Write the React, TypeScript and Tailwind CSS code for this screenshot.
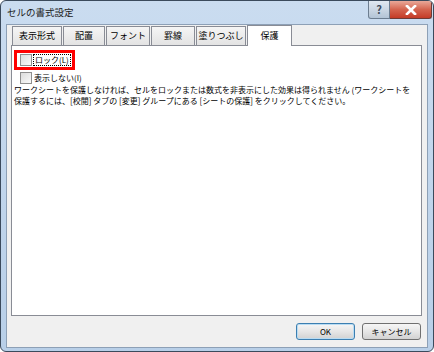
import React from 'react';

const tabs = [
    { label: '表示形式', w: 'w-[50px]' },
    { label: '配置', w: 'w-[42px]' },
    { label: 'フォント', w: 'w-[44px]' },
    { label: '罫線', w: 'w-[44px]' },
    { label: '塗りつぶし', w: 'w-[50px]' },
];

const font = { fontFamily: '"Noto Sans CJK JP", "Noto Sans", sans-serif' };

const Checkbox: React.FC = () => (
    <span className="w-[12px] h-[12px] border border-[#8f8f8f] bg-gradient-to-br from-[#dcdcdc] to-[#fafafa] shrink-0" />
);

const DialogButton: React.FC<{ label: string; isDefault?: boolean }> = ({ label, isDefault }) => (
    <button
        className={`w-[59px] h-[17px] rounded-[3px] border text-[8px] leading-none text-black bg-gradient-to-b from-[#f6f6f6] via-[#e6e6e6] to-[#d2d2d2] ${isDefault ? 'border-[#3c7fb1] shadow-[inset_0_0_0_1px_#b9dcf3]' : 'border-[#707070]'}`}
    >
        {label}
    </button>
);

export default function App() {
    return (
        <div className="w-[434px] h-[352px] bg-white" style={font}>
            <div className="w-[434px] h-[352px] flex flex-col border border-[#3b4a5c] rounded-[6px] bg-gradient-to-b from-[#cadcf0] to-[#b8cfe8] overflow-hidden">
                {/* title bar */}
                <div className="h-[23px] flex items-start">
                    <span className="pl-[6px] pt-[5px] text-[9.5px] leading-[12px] text-[#1b1b1b]">セルの書式設定</span>
                    <div className="ml-auto mr-[1px] flex">
                        <div className="w-[22px] h-[18px] flex items-center justify-center border border-t-0 border-[#6c7d90] rounded-bl-[3px] bg-gradient-to-b from-[#e0e8f1] via-[#cbd7e4] to-[#b3c4d6] text-[11px] font-bold text-[#3e4c5c]">
                            ?
                        </div>
                        <div className="w-[42px] h-[18px] flex items-center justify-center border border-t-0 border-l-0 border-[#6e3b36] rounded-br-[3px] bg-gradient-to-b from-[#e9a899] via-[#d4644f] to-[#c43a26]">
                            <svg width="12" height="10" viewBox="0 0 12 10">
                                <path d="M2 1 L10 9 M10 1 L2 9" stroke="#ffffff" strokeWidth="2.6" strokeLinecap="square" />
                            </svg>
                        </div>
                    </div>
                </div>
                {/* client area */}
                <div className="flex-1 mx-[5px] mb-[3px] border border-[#8da0b6] bg-[#f0f0f0] flex flex-col">
                    <div className="h-[20px] flex items-end pl-[5px]">
                        {tabs.map((t) => (
                            <div
                                key={t.label}
                                className={`${t.w} h-[19px] mr-[1px] flex items-center justify-center border border-b-0 border-[#898c95] bg-gradient-to-b from-[#f5f5f5] to-[#e3e3e3] text-[9px] text-black`}
                            >
                                {t.label}
                            </div>
                        ))}
                        <div className="w-[45px] h-[21px] -mb-[1px] relative z-10 flex items-center justify-center border border-b-0 border-[#898c95] bg-white text-[9px] text-black">
                            保護
                        </div>
                    </div>
                    <div className="flex-1 ml-[4px] mr-[5px] border border-[#898c95] bg-white px-[2px] pt-[1px]">
                        <div className="inline-flex h-[20px] border-[3px] border-[#ff0000] items-center pl-[3px] pr-[1px] gap-[1px] whitespace-nowrap">
                            <Checkbox />
                            <span className="text-[8px] leading-[10px] text-black border border-dotted border-black px-[1px]">ロック(L)</span>
                        </div>
                        <div className="flex items-center pl-[6px] mt-[1px] gap-[2px] h-[12px]">
                            <Checkbox />
                            <span className="text-[8px] leading-[10px] text-black">表示しない(I)</span>
                        </div>
                        <p className="mt-[0px] text-[8px] leading-[11px] text-black whitespace-nowrap">
                            ワークシートを保護しなければ、セルをロックまたは数式を非表示にした効果は得られません (ワークシートを
                            <br />
                            保護するには、[校閲] タブの [変更] グループにある [シートの保護] をクリックしてください。
                        </p>
                    </div>
                    <div className="flex justify-end gap-[7px] pt-[7px] pb-[7px] pr-[6px]">
                        <DialogButton label="OK" isDefault />
                        <DialogButton label="キャンセル" />
                    </div>
                </div>
            </div>
        </div>
    );
}
